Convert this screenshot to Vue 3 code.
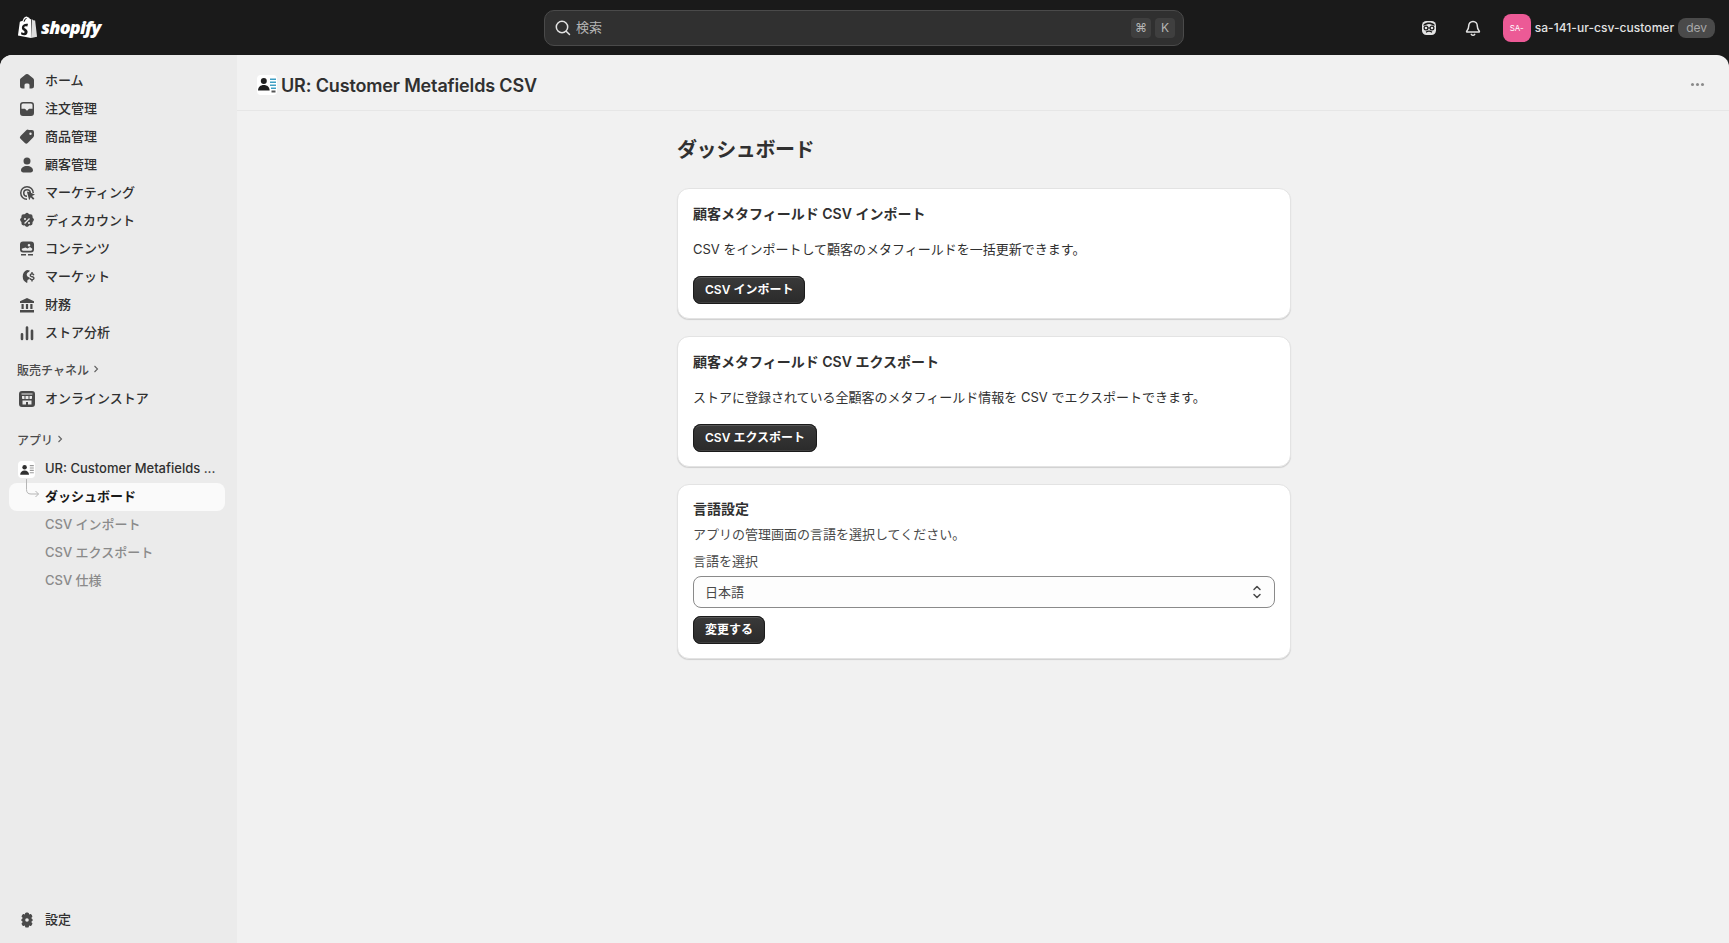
<script setup>
const p = {
  home: 'M8.900 3.300a1.800 1.800 0 0 1 2.200 0l5 3.900c.5.400.9 1 .9 1.700V15a2.500 2.500 0 0 1-2.500 2.500H12.500V14a1.500 1.500 0 0 0-1.500-1.500H9A1.500 1.500 0 0 0 7.500 14v3.500h-2A2.500 2.500 0 0 1 3 15V8.900c0-.7.300-1.300.9-1.700z',
  orders: 'M6 3h8a3 3 0 0 1 3 3v8a3 3 0 0 1-3 3H6a3 3 0 0 1-3-3V6a3 3 0 0 1 3-3zm0 1.500A1.500 1.500 0 0 0 4.500 6v3.800h3.200c.5 0 .8.300 1 .7.200.6.700 1 1.300 1s1.100-.4 1.300-1c.2-.4.500-.7 1-.7h3.200V6A1.500 1.500 0 0 0 14 4.500z',
  tag: 'M11.500 3H15a2 2 0 0 1 2 2v3.500c0 .8-.3 1.500-.9 2.100l-5.400 5.500a2 2 0 0 1-2.800 0l-4.400-4.400a2 2 0 0 1 0-2.800l5.500-5.500c.6-.6 1.300-.9 2.100-.9zM13.500 5.500a1.200 1.200 0 1 0 0 2.400 1.200 1.200 0 0 0 0-2.400z',
  person: 'M10 2.500a3.500 3.500 0 1 1 0 7 3.500 3.500 0 0 1 0-7zM10 11c3.600 0 6 1.900 6 4.300 0 1.300-1 2.200-2.300 2.200H6.300C5 17.500 4 16.600 4 15.300 4 12.900 6.400 11 10 11z',
  marketing: 'M10 3a7 7 0 0 1 7 7h-1.500a5.500 5.500 0 1 0-5.500 5.500V17a7 7 0 1 1 0-14zm0 3a4 4 0 0 1 4 4h-1.500A2.500 2.500 0 1 0 10 12.500V14a4 4 0 1 1 0-8zm0 2.900.6-.3 7.400 2.800-3 1.500 2.400 2.500-1.300 1.300-2.400-2.500-1.500 3z',
  discount: 'M8.300 2.700a2.300 2.300 0 0 1 3.400 0l.6.600.9-.1a2.300 2.300 0 0 1 2.400 2.400l-.1.900.6.600a2.300 2.300 0 0 1 0 3.400l-.6.600.1.900a2.300 2.300 0 0 1-2.400 2.400l-.9-.1-.6.600a2.300 2.300 0 0 1-3.400 0l-.6-.6-.9.100a2.300 2.300 0 0 1-2.400-2.400l.1-.9-.6-.6a2.300 2.300 0 0 1 0-3.400l.6-.6-.1-.9a2.300 2.300 0 0 1 2.400-2.400l.9.100zM12.100 7.100l-5 5 .9.900 5-5zM8 7a1 1 0 1 0 0 2 1 1 0 0 0 0-2zm4 4a1 1 0 1 0 0 2 1 1 0 0 0 0-2z',
  content: 'M6 2.500h8A3 3 0 0 1 17 5.500v5a3 3 0 0 1-3 3H6a3 3 0 0 1-3-3v-5a3 3 0 0 1 3-3zM4.700 9.800c0 1 .5 2 1.500 2h7.600c1 0 1.600-1 1.500-2l-2.300-1.900-2.500 1.700-2-1.100zM12 5a1.300 1.300 0 1 0 0 2.600A1.300 1.300 0 0 0 12 5zM4 15h5v1.500H4zm7 0h5v1.500h-5z',
  market: 'M10 3a7 7 0 0 1 2.900.6l-1 1.300c-1.200.2-2.200 1.300-2.200 2.600 0 1.600 1.200 2.500 2.900 2.900l-.2 1.500-1.900 1.100-.3 2.900H10A7 7 0 0 1 10 3zM14.300 5h1.400v1.300c.8.200 1.500.8 1.700 1.700l-1.300.4c-.2-.5-.6-.8-1.100-.8-.6 0-1 .3-1 .7s.3.600 1.200.8c1.300.3 2.400.8 2.400 2.200 0 1.100-.8 1.800-1.900 2v1.200h-1.400v-1.200c-1-.2-1.700-.9-1.900-1.800l1.300-.4c.2.600.7 1 1.300 1 .7 0 1.200-.3 1.200-.8s-.4-.7-1.300-.9c-1.200-.3-2.300-.8-2.300-2.100 0-1 .7-1.800 1.700-2z',
  finance: 'M10 3 17 6.300V8H3V6.300zM4.500 9h2.200v5H4.500zm4.400 0h2.200v5H8.900zm4.400 0h2.200v5h-2.200zM3 15h14v2.500H3z',
  analytics: 'M8.700 4.500a1.300 1.300 0 0 1 2.600 0v11.500a1.300 1.300 0 0 1-2.600 0zM13.700 7.800a1.300 1.300 0 0 1 2.600 0v8.200a1.300 1.300 0 0 1-2.600 0zM3.700 11.300a1.300 1.300 0 0 1 2.600 0V16a1.300 1.300 0 0 1-2.600 0z',
  settings: 'M8.200 3.100c.2-.9 3.400-.9 3.600 0l.3 1.300 1.300-.4c.9-.3 2.500 2.500 1.800 3.100l-1 .9 1 .9c.7.600.7 1.600 0 2.200l-1 .9 1 .9c.7.600-.9 3.400-1.800 3.100l-1.300-.4-.3 1.300c-.2.900-3.400.9-3.600 0l-.3-1.300-1.300.4c-.9.300-2.500-2.500-1.800-3.100l1-.9-1-.9c-.7-.6-.7-1.600 0-2.200l1-.9-1-.9c-.7-.6.900-3.400 1.800-3.100l1.300.4zM10 8.200a1.800 1.800 0 1 0 0 3.600 1.800 1.800 0 0 0 0-3.600z',
}
const main = [
  ['ホーム', p.home], ['注文管理', p.orders], ['商品管理', p.tag], ['顧客管理', p.person],
  ['マーケティング', p.marketing], ['ディスカウント', p.discount], ['コンテンツ', p.content],
  ['マーケット', p.market], ['財務', p.finance], ['ストア分析', p.analytics],
]
const subs = ['CSV インポート', 'CSV エクスポート', 'CSV 仕様']
</script>

<template>
  <div class="app">
    <header class="topbar">
      <div class="brand">
        <svg class="bag" viewBox="0 0 22 24" width="21" height="23">
          <path fill="#fff" d="M14.800 3.100 13.700 3.400C13.200 2 12.400 1.200 11.500 1.200h-.2C10.900.7 10.400.500 10 .5 7.600.5 6.400 3.500 6 5L3.700 5.700c-.7.200-.7.200-.8.900L1 20.500l13.600 2.500zM10 2.100c.2 0 .3.100.5.200-.9.400-1.900 1.500-2.300 3.400l-1.400.4C7.200 4.700 8.100 2.100 10 2.100z"/>
          <path fill="#ddd" d="M15.600 3 17 4.400l2 .2 2 17-6.300 1.400z"/>
          <path fill="#1a1a1a" d="M11.500 8.400 10.800 11s-.8-.4-1.800-.3c-1.400.1-1.400 1-1.400 1.200.1 1.200 3.300 1.500 3.500 4.400.1 2.300-1.200 3.800-3.200 3.900-2.400.2-3.700-1.300-3.700-1.300l.5-2.100s1.300 1 2.400.9c.7 0 .9-.6.900-1-.1-1.600-2.700-1.500-2.900-4.100-.1-2.200 1.300-4.400 4.500-4.600 1.200-.1 1.900.2 1.900.2z"/>
        </svg>
        <span class="wordmark">shopify</span>
      </div>
      <div class="search">
        <svg class="search-icon" viewBox="0 0 20 20" width="20" height="20"><circle cx="9" cy="9" r="5.700" fill="none" stroke="#e3e3e3" stroke-width="1.500"/><path d="m13.200 13.200 3.300 3.300" stroke="#e3e3e3" stroke-width="1.500" stroke-linecap="round"/></svg>
        <span class="search-text">検索</span>
        <span class="keys"><kbd>⌘</kbd><kbd>K</kbd></span>
      </div>
      <div class="top-right">
        <svg class="top-icon" viewBox="0 0 20 20" width="20" height="20">
          <rect x="3" y="3" width="14" height="14" rx="4.500" fill="#e3e3e3"/>
          <path d="M4.500 8c1.800-.9 3.600-2 5.500-2s3.700 1.100 5.500 2V6.500C14 5 12 4.500 10 4.500S6 5 4.500 6.500z" fill="#1a1a1a"/>
          <circle cx="7" cy="10" r="1.900" fill="none" stroke="#1a1a1a" stroke-width="1.200"/>
          <circle cx="13" cy="10" r="1.900" fill="none" stroke="#1a1a1a" stroke-width="1.200"/>
          <path d="M8.900 10h2.200M7 14.300c1-.9 2-1.200 3-1.200s2 .3 3 1.200" fill="none" stroke="#1a1a1a" stroke-width="1.200"/>
        </svg>
        <svg class="top-icon bell" viewBox="0 0 20 20" width="20" height="20">
          <path fill="none" stroke="#e3e3e3" stroke-width="1.500" stroke-linejoin="round" d="M10 3.500c-2.600 0-4.300 2-4.300 4.500 0 2.800-1.200 4-2 5.200-.3.500 0 .8.500.8h11.600c.5 0 .8-.3.500-.8-.8-1.200-2-2.400-2-5.200 0-2.500-1.700-4.500-4.300-4.500z"/>
          <path fill="none" stroke="#e3e3e3" stroke-width="1.500" stroke-linecap="round" d="M8.300 16.300c.4.600 1 .9 1.700.9s1.300-.3 1.700-.9"/>
        </svg>
        <span class="avatar">SA-</span>
        <span class="store-name">sa-141-ur-csv-customer</span>
        <span class="dev">dev</span>
      </div>
    </header>

    <div class="body">
      <aside class="sidebar">
        <nav class="nav">
          <a v-for="item in main" :key="item[0]" class="item">
            <svg class="icon" viewBox="0 0 20 20" width="20" height="20"><path :d="item[1]" fill="#4a4a4a" fill-rule="evenodd"/></svg>
            <span>{{ item[0] }}</span>
          </a>
        </nav>

        <div class="section first">販売チャネル<svg viewBox="0 0 10 10" width="10" height="10"><path d="m3.500 2 3 3-3 3" fill="none" stroke="#616161" stroke-width="1.100"/></svg></div>
        <a class="item">
          <svg class="icon" viewBox="0 0 20 20" width="20" height="20">
            <path fill="#4a4a4a" fill-rule="evenodd" d="M5 2h10a3 3 0 0 1 3 3v10a3 3 0 0 1-3 3H5a3 3 0 0 1-3-3V5a3 3 0 0 1 3-3zm-.500 2.500v1h11v-1zm.500 2.500v2c0 .6.400 1 1 1h8c.6 0 1-.4 1-1V7zm.500 4.500v4h3.500V13h2v2.500h3.500v-4z"/>
            <path fill="#4a4a4a" d="M7.500 7h1v3h-1zm4 0h1v3h-1z"/>
          </svg>
          <span>オンラインストア</span>
        </a>

        <div class="section second">アプリ<svg viewBox="0 0 10 10" width="10" height="10"><path d="m3.500 2 3 3-3 3" fill="none" stroke="#616161" stroke-width="1.100"/></svg></div>
        <a class="item">
          <span class="app-tile">
            <svg viewBox="0 0 20 20" width="16" height="16">
              <circle cx="7" cy="6.500" r="2.800" fill="#303030"/><path d="M1.500 16c0-3.500 2.300-5.500 5.500-5.500s5.500 2 5.500 5.500z" fill="#303030"/>
              <path d="M13.500 4.500h5M13.500 7.500h5M13.500 10.500h5M13.500 13.500h5" stroke="#9a9a9a" stroke-width="1.400"/>
            </svg>
          </span>
          <span class="ellipsis">UR: Customer Metafields ...</span>
        </a>
        <a class="item active">
          <svg class="tree" viewBox="0 0 20 32" width="20" height="32"><path d="M5.500 0v10.500c0 3 1.500 4.500 4.500 4.500h7.500m-3-3 3 3-3 3" fill="none" stroke="#b5b5b5" stroke-width="1"/></svg>
          <span>ダッシュボード</span>
        </a>
        <a v-for="s in subs" :key="s" class="item sub"><span>{{ s }}</span></a>

        <a class="item settings">
          <svg class="icon" viewBox="0 0 20 20" width="20" height="20"><path :d="p.settings" fill="#4a4a4a" fill-rule="evenodd"/></svg>
          <span>設定</span>
        </a>
      </aside>

      <main class="main">
        <div class="page-header">
          <span class="title-tile">
            <svg viewBox="0 0 20 20" width="20" height="20">
              <circle cx="6.800" cy="6" r="3" fill="#1f1f1f"/><path d="M1 15.500c0-3.300 2.400-5.500 5.800-5.500s5.800 2.200 5.800 5.500z" fill="#1f1f1f"/>
              <path d="M13 4.200h6M13 7.200h6M13 10.200h6M14 13.200h5" stroke="#3f9fc4" stroke-width="1.500"/>
              <path d="M14.500 15.500h4v2h-4z" fill="#555"/>
            </svg>
          </span>
          <h1>UR: Customer Metafields CSV</h1>
          <span class="dots"><i></i><i></i><i></i></span>
        </div>

        <div class="page">
          <h2>ダッシュボード</h2>
          <section class="card">
            <h3>顧客メタフィールド CSV インポート</h3>
            <p class="desc">CSV をインポートして顧客のメタフィールドを一括更新できます。</p>
            <button class="btn">CSV インポート</button>
          </section>
          <section class="card">
            <h3>顧客メタフィールド CSV エクスポート</h3>
            <p class="desc">ストアに登録されている全顧客のメタフィールド情報を CSV でエクスポートできます。</p>
            <button class="btn">CSV エクスポート</button>
          </section>
          <section class="card lang">
            <h3>言語設定</h3>
            <p class="hint">アプリの管理画面の言語を選択してください。</p>
            <label class="label">言語を選択</label>
            <div class="select">
              <span class="select-value">日本語</span>
              <svg viewBox="0 0 20 20" width="20" height="20"><path d="m7 7.500 3-3 3 3M7 12.500l3 3 3-3" fill="none" stroke="#4a4a4a" stroke-width="1.500" stroke-linecap="round" stroke-linejoin="round"/></svg>
            </div>
            <button class="btn">変更する</button>
          </section>
        </div>
      </main>
    </div>
  </div>
</template>

<style scoped>
.app {
  height: 943px;
  display: flex;
  flex-direction: column;
  background: #1a1a1a;
  overflow: hidden;
  font-family: Inter, "Noto Sans CJK JP", sans-serif;
  font-size: 13px;
  color: #303030;
}
.topbar {
  height: 55px;
  flex: none;
  display: flex;
  align-items: center;
  position: relative;
  color: #e3e3e3;
}
.brand {
  display: flex;
  align-items: center;
  gap: 3px;
  margin-left: 17px;
  width: 527px;
}
.wordmark {
  font-family: "Open Sans", sans-serif;
  font-style: italic;
  font-weight: 800;
  font-size: 18px;
  letter-spacing: -0.8px;
  color: #fff;
  line-height: 24px;
  padding-bottom: 2px;
}
.search {
  width: 640px;
  height: 36px;
  box-sizing: border-box;
  background: #303030;
  border: 1px solid #4a4a4a;
  border-radius: 10px;
  display: flex;
  align-items: center;
  padding: 0 8px 0 8px;
}
.search-icon { margin-right: 2px; }
.search-text { color: #b5b5b5; padding-bottom: 2px; margin-left: 1px; }
.keys { margin-left: auto; display: flex; gap: 4px; }
kbd {
  width: 20px;
  height: 20px;
  border-radius: 4px;
  background: #3f3f3f;
  color: #b5b5b5;
  font: 12px Inter, "DejaVu Sans", sans-serif;
  display: flex;
  align-items: center;
  justify-content: center;
}
.top-right {
  margin-left: auto;
  display: flex;
  align-items: center;
  padding-right: 14px;
}
.top-icon { margin-right: 24px; }
.bell { margin-right: 20px; }
.avatar {
  width: 28px;
  height: 28px;
  border-radius: 8px;
  background: #ec5a96;
  color: #fff;
  font-size: 8px;
  display: flex;
  align-items: center;
  justify-content: center;
  margin-right: 4px;
}
.store-name { font-size: 12px; font-weight: 450; letter-spacing: 0.05px; color: #e3e3e3; padding-bottom: 1px; }
.dev {
  margin-left: 4px;
  height: 20px;
  padding: 0 8px;
  border-radius: 8px;
  background: #4a4a4a;
  color: #a8a8a8;
  font-size: 12px;
  display: flex;
  align-items: center;
}
.body {
  flex: 1;
  min-height: 0;
  display: flex;
  border-radius: 12px 12px 0 0;
  overflow: hidden;
  background: #f1f1f1;
}
.sidebar {
  width: 237px;
  flex: none;
  box-sizing: border-box;
  background: #ebebeb;
  padding: 12px 0 9px;
  display: flex;
  flex-direction: column;
}
.nav { display: flex; flex-direction: column; }
.item {
  height: 28px;
  box-sizing: border-box;
  flex: none;
  display: flex;
  align-items: center;
  margin: 0 12px 0 9px;
  padding: 0 0 3px 36px;
  position: relative;
  font-weight: 500;
  color: #303030;
  white-space: nowrap;
}
.icon {
  position: absolute;
  left: 8px;
  top: 4px;
}
.section {
  height: 18px;
  box-sizing: border-box;
  display: flex;
  align-items: center;
  padding: 0 0 2px 17px;
  font-size: 12px;
  font-weight: 500;
  color: #4a4a4a;
  gap: 2px;
}
.section.first { margin: 14px 0 6px; }
.section.second { margin: 18px 0 6px; }
.app-tile {
  position: absolute;
  left: 9px;
  top: 6px;
  width: 17px;
  height: 17px;
  background: #fff;
  border-radius: 4px;
  display: flex;
  align-items: center;
  justify-content: center;
}
.active {
  background: #fafafa;
  border-radius: 8px;
  font-weight: 600;
  color: #1a1a1a;
}
.tree { position: absolute; left: 12px; top: -4px; }
.sub { color: #8a8a8a; font-weight: 450; }
.settings { margin-top: auto; }
.main { flex: 1; min-width: 0; padding-left: 2px; }
.page-header {
  height: 56px;
  box-sizing: border-box;
  border-bottom: 1px solid #e6e6e6;
  margin-left: -2px;
  display: flex;
  align-items: center;
  padding: 4px 25px 0 20px;
}
.title-tile {
  width: 20px;
  height: 20px;
  background: #fff;
  border-radius: 4px;
  margin-right: 4px;
  display: flex;
}
h1 {
  margin: 0;
  padding-top: 2px;
  font-size: 18px;
  line-height: 24px;
  font-weight: 600;
  letter-spacing: -0.15px;
  color: #303030;
}
.dots { margin-left: auto; display: flex; gap: 2px; }
.dots i { width: 3px; height: 3px; border-radius: 50%; background: #8a8a8a; }
.page {
  width: 614px;
  margin: 0 auto;
}
h2 {
  margin: 0;
  padding: 26px 0 25px;
  font-size: 20px;
  line-height: 26px;
  font-weight: 600;
  letter-spacing: -0.4px;
  color: #303030;
}
.card {
  box-sizing: border-box;
  height: 131px;
  margin-bottom: 17px;
  padding: 15px;
  background: #fff;
  border: 1px solid #e3e3e3;
  border-radius: 12px;
  box-shadow: 0 1px 1px rgba(0, 0, 0, 0.14);
}
.card.lang { height: 175px; padding-top: 14px; }
h3 {
  margin: 0;
  font-size: 14px;
  line-height: 20px;
  font-weight: 600;
  color: #303030;
}
.desc {
  margin: 15px 0 17px;
  line-height: 20px;
  color: #303030;
}
.btn {
  display: block;
  box-sizing: border-box;
  height: 28px;
  padding: 0 12px 3px;
  border: none;
  border-radius: 8px;
  font-family: inherit;
  font-size: 12px;
  font-weight: 600;
  color: #fff;
  background: linear-gradient(#3a3a3a, #2a2a2a);
  box-shadow: inset 0 0 0 1px #1a1a1a, inset 0 2px 0 rgba(255, 255, 255, 0.16), inset 0 -2px 0 rgba(255, 255, 255, 0.1);
}
.hint { margin: 5px 0 7px; line-height: 20px; color: #4a4a4a; }
.label { display: block; line-height: 20px; color: #4a4a4a; margin-bottom: 5px; }
.select {
  height: 32px;
  box-sizing: border-box;
  border: 1px solid #8a8a8a;
  border-radius: 8px;
  background: #fdfdfd;
  display: flex;
  align-items: center;
  justify-content: space-between;
  padding: 0 7px 0 11px;
  margin-bottom: 8px;
  color: #4a4a4a;
}
.select-value { padding-bottom: 2px; }
</style>

<style>
html, body { margin: 0; background: #1a1a1a; }
</style>
